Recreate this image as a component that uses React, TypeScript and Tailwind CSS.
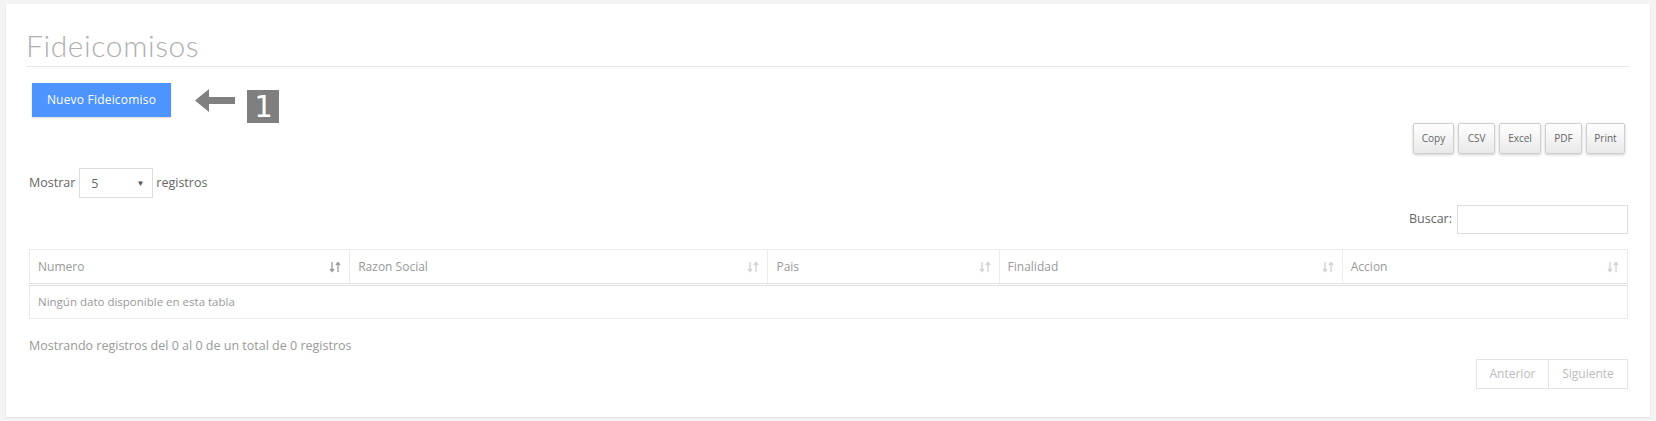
import React from 'react';

const SortIcon = ({ active }: { active?: boolean }) => (
  <svg width="12" height="12" viewBox="0 0 12 12" className={active ? 'text-[#999]' : 'text-[#d0d0d0]'}>
    <path d="M3 1v9M1 8l2 2.5L5 8" stroke="currentColor" strokeWidth="1.3" fill="none" />
    <path d="M9 11V2M7 4l2-2.5L11 4" stroke="currentColor" strokeWidth="1.3" fill="none" />
  </svg>
);

const columns = [
  { label: 'Numero', w: 'w-[320px]', active: true },
  { label: 'Razon Social', w: 'w-[418px]' },
  { label: 'Pais', w: 'w-[231px]' },
  { label: 'Finalidad', w: 'w-[343px]' },
  { label: 'Accion', w: 'w-[285px]' },
];

const exportButtons = [
  { label: 'Copy', w: 'w-[41px]' },
  { label: 'CSV', w: 'w-[37px]' },
  { label: 'Excel', w: 'w-[42px]' },
  { label: 'PDF', w: 'w-[37px]' },
  { label: 'Print', w: 'w-[39px]' },
];

export default function App() {
  return (
    <div className="h-[421px] w-[1656px] bg-[#f4f4f4] pt-[4px] font-['Open_Sans',sans-serif] text-[#777]">
      <div className="mx-[6px] h-[413px] bg-white pl-[20px] pr-[21px] shadow-[0_1px_2px_rgba(0,0,0,0.08)]">
        {/* Header */}
        <div className="border-b border-[#e6e6e6] pt-[25px] pb-[5px]">
          <h1 className="font-['Lato',sans-serif] text-[30px] font-light leading-[32px] tracking-[0.6px] text-[#b0b0b0]">Fideicomisos</h1>
        </div>

        <div className="mt-[16px] ml-[6px] flex h-[34px] items-start">
          <button className="h-[34px] w-[139px] bg-[#4d94ff] text-[12px] tracking-[0.2px] text-white shadow-[0_1px_2px_rgba(0,0,0,0.15)]">
            Nuevo Fideicomiso
          </button>
          <svg width="40" height="30" viewBox="0 0 40 30" className="ml-[24px] mt-[3px]">
            <path d="M0 14.5L14 3v8h26v7H14v8z" fill="#808080" />
          </svg>
          <div className="ml-[12px] mt-[7px] flex h-[33px] w-[32px] shrink-0 items-center justify-center bg-[#7f7f7f] font-['DejaVu_Sans_Mono',monospace] text-[30px] leading-none text-white">
            1
          </div>
        </div>

        {/* Export buttons */}
        <div className="mt-[6px] mr-[4px] flex justify-end gap-[4px]">
          {exportButtons.map((b) => (
            <button
              key={b.label}
              className={`${b.w} h-[31px] rounded-[2px] border border-[#cfcfcf] bg-gradient-to-b from-white to-[#e9e9e9] text-[10px] text-[#666] shadow-[0_1px_3px_rgba(0,0,0,0.2)]`}
            >
              {b.label}
            </button>
          ))}
        </div>

        {/* Length */}
        <div className="mt-[14px] ml-[3px] flex items-center text-[12.5px] text-[#666]">
          <span>Mostrar</span>
          <div className="ml-[4px] flex h-[30px] w-[74px] items-center justify-between border border-[#ddd] pl-[11px] pr-[8px]">
            <span className="mt-[3px]">5</span>
            <span className="text-[8px] text-[#555]">▼</span>
          </div>
          <span className="ml-[3px]">registros</span>
        </div>

        {/* Search */}
        <div className="mt-[7px] mr-[1px] flex items-center justify-end text-[12.5px] text-[#666]">
          <span className="mr-[5px]">Buscar:</span>
          <div className="h-[29px] w-[171px] border border-[#ddd]" />
        </div>

        {/* Table */}
        <div className="ml-[3px] mr-[1px] mt-[15px]">
          <table className="w-full table-fixed border-collapse text-[12px]">
            <thead>
              <tr className="border-b-[3px] border-double border-[#e3e3e3]">
                {columns.map((c) => (
                  <th key={c.label} className={`${c.w} h-[35px] border border-b-0 border-[#ececec] px-[8px] text-left font-normal text-[#999]`}>
                    <div className="flex items-center justify-between">
                      <span>{c.label}</span>
                      <SortIcon active={c.active} />
                    </div>
                  </th>
                ))}
              </tr>
            </thead>
            <tbody>
              <tr>
                <td colSpan={5} className="h-[34px] border border-[#ececec] px-[8px] text-[11.5px] text-[#999]">
                  Ningún dato disponible en esta tabla
                </td>
              </tr>
            </tbody>
          </table>
        </div>

        <div className="mt-[19px] ml-[3px] text-[12.5px] leading-[16px] text-[#999]">
          Mostrando registros del 0 al 0 de un total de 0 registros
        </div>

        {/* Pagination */}
        <div className="mt-[5px] mr-[1px] flex justify-end text-[12px] text-[#bbb]">
          <div className="flex h-[30px] border border-[#e3e3e3]">
            <span className="flex w-[72px] items-center justify-center border-r border-[#e3e3e3]">Anterior</span>
            <span className="flex w-[78px] items-center justify-center">Siguiente</span>
          </div>
        </div>
      </div>
    </div>
  );
}
